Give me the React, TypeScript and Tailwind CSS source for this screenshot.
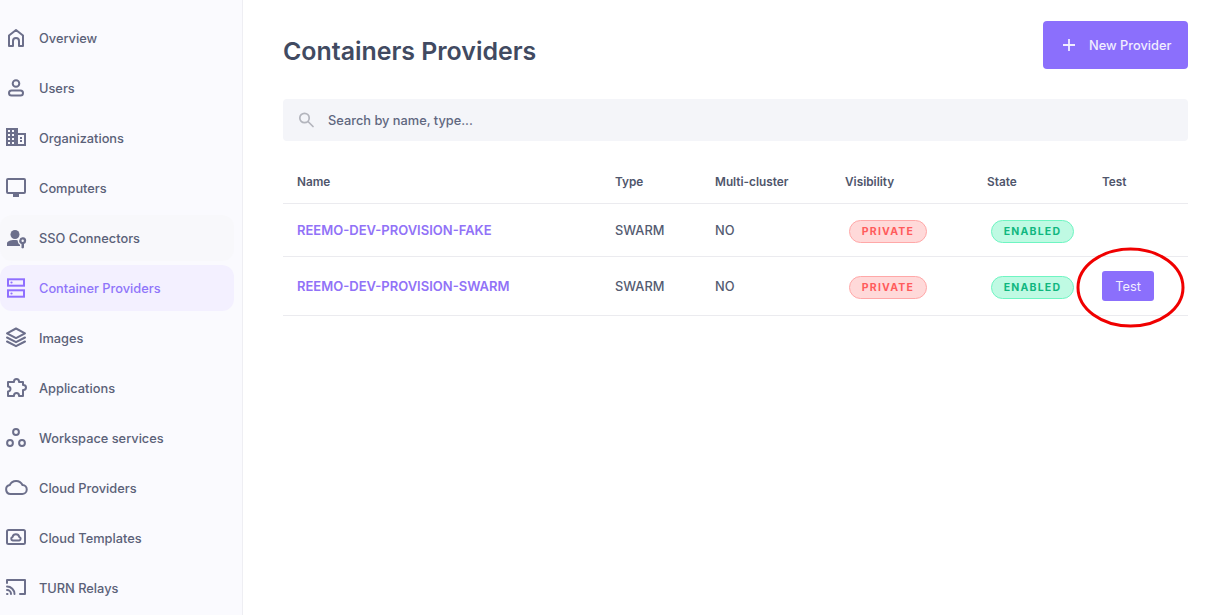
import React from "react";

const Ico = ({ children }: { children: React.ReactNode }) => (
  <svg
    viewBox="0 0 24 24"
    width="24"
    height="24"
    fill="none"
    stroke="currentColor"
    strokeWidth="2"
    strokeLinejoin="round"
    strokeLinecap="round"
    className="shrink-0"
  >
    {children}
  </svg>
);

const navItems: { label: string; icon: React.ReactNode; state?: "hover" | "active" }[] = [
  {
    label: "Overview",
    icon: (
      <Ico>
        <path d="M5 20V9.500L12 4l7 5.500V20h-4v-5a3 3 0 0 0-6 0v5z" />
      </Ico>
    ),
  },
  {
    label: "Users",
    icon: (
      <Ico>
        <circle cx="12" cy="7.500" r="3.300" />
        <rect x="5" y="14.500" width="14" height="5" rx="2.500" />
      </Ico>
    ),
  },
  {
    label: "Organizations",
    icon: (
      <svg viewBox="0 0 24 24" width="24" height="24" fill="currentColor" className="shrink-0">
        <path
          fillRule="evenodd"
          d="M2 2h12v5h8v13H2zm2 2v2h2V4zm4 0v2h2V4zM4 8v2h2V8zm4 0v2h2V8zm-4 4v2h2v-2zm4 0v2h2v-2zm-4 4v2h2v-2zm4 0v2h2v-2zm6-7v9h6V9zm2 2h2v2h-2zm0 3h2v2h-2z"
        />
      </svg>
    ),
  },
  {
    label: "Computers",
    icon: (
      <Ico>
        <rect x="3" y="3" width="18" height="14" rx="1" />
        <path d="M9 19.500h6" strokeWidth="3" strokeLinecap="butt" />
      </Ico>
    ),
  },
  {
    label: "SSO Connectors",
    state: "hover",
    icon: (
      <svg viewBox="0 0 24 24" width="24" height="24" fill="currentColor" className="shrink-0">
        <circle cx="11" cy="8.500" r="4.500" />
        <path d="M3 20v-2.500C3 15.500 6 14 10.500 14c1.300 0 2.400.1 3.300.4-.1 1.800.6 3.300 2.200 4.300V20z" />
        <path
          fillRule="evenodd"
          d="M22.200 14.700a3.500 3.500 0 1 0-4.700 3.300V22l1.500.5 1-1v-3.500a3.500 3.500 0 0 0 2.200-3.300zm-3.500-1.200a1.200 1.200 0 1 1 0 2.400 1.200 1.200 0 0 1 0-2.400z"
        />
      </svg>
    ),
  },
  {
    label: "Container Providers",
    state: "active",
    icon: (
      <svg viewBox="0 0 24 24" width="24" height="24" fill="none" stroke="currentColor" strokeWidth="2" className="shrink-0">
        <rect x="4" y="3.300" width="16" height="6.400" />
        <rect x="4" y="14.300" width="16" height="6.400" />
        <circle cx="7.500" cy="6.500" r="1.100" fill="currentColor" stroke="none" />
        <circle cx="7.500" cy="17.500" r="1.100" fill="currentColor" stroke="none" />
      </svg>
    ),
  },
  {
    label: "Images",
    icon: (
      <Ico>
        <path d="M12 2.500l9 4.800-9 4.800-9-4.800z" />
        <path d="M3 11.500l9 4.700 9-4.700" />
        <path d="M3 15.500l9 4.700 9-4.700" />
      </Ico>
    ),
  },
  {
    label: "Applications",
    icon: (
      <Ico>
        <path d="M4 6h6v-.5a2.500 2.500 0 0 1 5 0V6h4v3h.5a2.500 2.500 0 0 1 0 5H19v6h-4v-.5a2.500 2.500 0 0 0-5 0v.5H4v-4.500a2.500 2.500 0 0 0 0-5z" />
      </Ico>
    ),
  },
  {
    label: "Workspace services",
    icon: (
      <Ico>
        <circle cx="12" cy="6" r="2.900" />
        <circle cx="6" cy="17" r="2.900" />
        <circle cx="18" cy="17" r="2.900" />
      </Ico>
    ),
  },
  {
    label: "Cloud Providers",
    icon: (
      <Ico>
        <path d="M6.500 18a4.500 4.500 0 0 1-.8-8.900A7 7 0 0 1 18.500 9 4.500 4.500 0 0 1 18 18z" />
      </Ico>
    ),
  },
  {
    label: "Cloud Templates",
    icon: (
      <Ico>
        <rect x="3" y="4" width="18" height="14" rx="1.500" />
        <path d="M8.800 14.500a1.800 1.800 0 0 1-.3-3.500 3.500 3.500 0 0 1 6.800 0 1.800 1.800 0 0 1-.1 3.500z" />
      </Ico>
    ),
  },
  {
    label: "TURN Relays",
    icon: (
      <Ico>
        <path d="M3 7V4h18v14h-5" />
        <path d="M3 10.500a7.500 7.500 0 0 1 7.500 7.500" />
        <path d="M3 14a4 4 0 0 1 4 4" />
        <path d="M3 18h.5" />
      </Ico>
    ),
  },
];

const Badge = ({ kind }: { kind: "private" | "enabled" }) =>
  kind === "private" ? (
    <span className="inline-flex h-[23px] w-[78px] items-center justify-center rounded-full border border-[#ffa8a8] bg-[#ffd9d9] pt-[2px] text-[10.500px] font-bold tracking-[1.200px] text-[#ff5c5c]">
      PRIVATE
    </span>
  ) : (
    <span className="inline-flex h-[23px] w-[83px] items-center justify-center rounded-full border border-[#6ff5c2] bg-[#bffae3] pt-[2px] text-[10.500px] font-bold tracking-[1.200px] text-[#10b77f]">
      ENABLED
    </span>
  );

const rows = [
  { name: "REEMO-DEV-PROVISION-FAKE", test: false },
  { name: "REEMO-DEV-PROVISION-SWARM", test: true },
];

export default function App() {
  return (
    <div className="relative flex h-[615px] w-[1205px] overflow-hidden bg-white font-['Inter',sans-serif] text-[#3f4a5f]">
      <aside className="flex w-[243px] shrink-0 flex-col gap-1 border-r border-[#eeeef3] bg-[#fafafe] pt-[15px]">
        {navItems.map((item) => (
          <div
            key={item.label}
            className={`flex h-[46px] w-[234px] shrink-0 items-center gap-[11px] rounded-xl pl-1 text-[12.800px] font-medium ${
              item.state === "active"
                ? "bg-[#f3f0ff] text-[#8f75fa]"
                : item.state === "hover"
                  ? "bg-[#f8f8fb] text-[#5a6178]"
                  : "text-[#5a6178]"
            }`}
          >
            <span className={item.state === "active" ? "text-[#8f6fff]" : "text-[#6c6f8b]"}>{item.icon}</span>
            <span className="pt-px">{item.label}</span>
          </div>
        ))}
      </aside>

      <main className="flex-1 pl-10 pr-[17px] pt-[21px]">
        <div className="flex h-12 items-center justify-between">
          <h1 className="pt-[12px] text-[24.900px] font-semibold leading-none text-[#414a61]">Containers Providers</h1>
          <button className="flex h-12 w-[145px] items-center gap-[13px] rounded-[4px] bg-[#8b6ffc] pl-[19px] text-[12.800px] font-medium text-[#f1edff]">
            <svg viewBox="0 0 14 14" width="14" height="14" fill="none" stroke="currentColor" strokeWidth="1.800">
              <path d="M7 1v12M1 7h12" />
            </svg>
            <span className="pt-px">New Provider</span>
          </button>
        </div>

        <div className="mt-[30px] flex h-[42px] items-center gap-[14px] rounded-[4px] bg-[#f4f5f9] pl-[15px] text-[12.800px] font-medium text-[#5f677f]">
          <svg viewBox="0 0 16 16" width="16" height="16" fill="none" stroke="#b3b5bd" strokeWidth="1.700" strokeLinecap="round">
            <circle cx="6.500" cy="6" r="4.700" />
            <path d="M10 9.500l5 5" />
          </svg>
          <span className="pt-px">Search by name, type...</span>
        </div>

        <table className="mt-[20px] w-[905px] table-fixed border-collapse text-left text-[12.800px]">
          <thead>
            <tr className="h-[42px] border-b border-[#ebebef] text-[11.800px] font-semibold text-[#4f566c]">
              <th className="w-[318px] pl-[14px] pt-[2px] font-semibold">Name</th>
              <th className="w-[100px] pl-[14px] pt-[2px] font-semibold">Type</th>
              <th className="w-[130px] pl-[14px] pt-[2px] font-semibold">Multi-cluster</th>
              <th className="w-[142px] pl-[14px] pt-[2px] font-semibold">Visibility</th>
              <th className="w-[115px] pl-[14px] pt-[2px] font-semibold">State</th>
              <th className="w-[100px] pl-[14px] pt-[2px] font-semibold">Test</th>
            </tr>
          </thead>
          <tbody>
            {rows.map((row) => (
              <tr key={row.name} className={`border-b border-[#ebebef] ${row.test ? "h-[59px]" : "h-[53px]"}`}>
                <td className="pl-[14px] pt-[2px] text-[13px] font-semibold text-[#9172f7]">{row.name}</td>
                <td className="pl-[14px] pt-[2px] font-medium text-[#545b71]">SWARM</td>
                <td className="pl-[14px] pt-[2px] font-medium text-[#545b71]">NO</td>
                <td className="pl-[18px] pt-[3px]">
                  <Badge kind="private" />
                </td>
                <td className="pl-[18px] pt-[3px]">
                  <Badge kind="enabled" />
                </td>
                <td className="pl-[14px]">
                  {row.test && (
                    <button className="flex h-[30px] w-[52px] items-center justify-center rounded-[3px] bg-[#8b6ffc] pt-[2px] text-[12.800px] font-normal text-[#f1edff]">
                      Test
                    </button>
                  )}
                </td>
              </tr>
            ))}
          </tbody>
        </table>
      </main>

      {/* annotation drawn on top of the screenshot */}
      <svg className="pointer-events-none absolute left-[1070px] top-[240px]" width="122" height="96" fill="none">
        <ellipse cx="60.500" cy="47.500" rx="52.500" ry="38.500" stroke="#f00000" strokeWidth="3" />
      </svg>
    </div>
  );
}
